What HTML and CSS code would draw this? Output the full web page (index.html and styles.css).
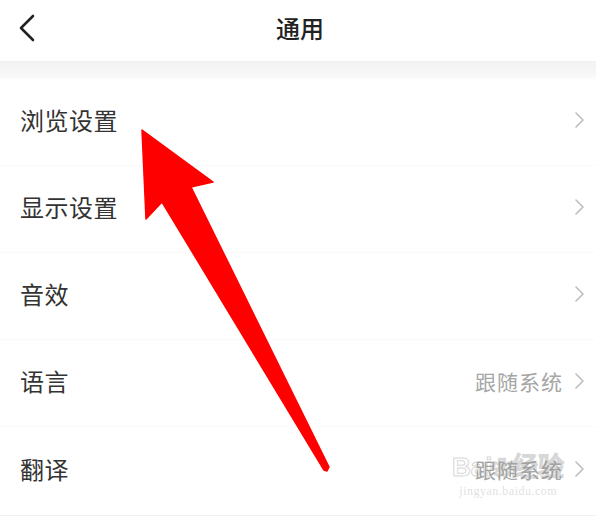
FILE: index.html
```html
<!DOCTYPE html>
<html lang="zh-CN">
<head>
  <meta charset="UTF-8" />
  <meta name="viewport" content="width=device-width, initial-scale=1.0" />
  <title>通用</title>
  <link rel="stylesheet" href="styles.css">
</head>
<body>
  <div class="page">
    <header class="topbar">
      <svg class="back" width="20" height="32" viewBox="0 0 20 32">
        <polyline points="15,3 3,15 15,27" fill="none" stroke="#222" stroke-width="2.6" stroke-linecap="round" stroke-linejoin="round" />
      </svg>
      <h1 class="title">通用</h1>
    </header>
    <div class="band"></div>

    <ul class="settings">
      <li class="row">
        <span class="label">浏览设置</span>
        <svg class="chevron" width="12" height="16" viewBox="0 0 12 16"><polyline points="2,1 9,8 2,15" /></svg>
      </li>
      <li class="row">
        <span class="label">显示设置</span>
        <svg class="chevron" width="12" height="16" viewBox="0 0 12 16"><polyline points="2,1 9,8 2,15" /></svg>
      </li>
      <li class="row">
        <span class="label">音效</span>
        <svg class="chevron" width="12" height="16" viewBox="0 0 12 16"><polyline points="2,1 9,8 2,15" /></svg>
      </li>
      <li class="row">
        <span class="label">语言</span>
        <span class="value">跟随系统</span>
        <svg class="chevron" width="12" height="16" viewBox="0 0 12 16"><polyline points="2,1 9,8 2,15" /></svg>
      </li>
      <li class="row">
        <span class="label">翻译</span>
        <span class="value">跟随系统</span>
        <svg class="chevron" width="12" height="16" viewBox="0 0 12 16"><polyline points="2,1 9,8 2,15" /></svg>
      </li>
    </ul>

    <!-- annotation arrow drawn over the list -->
    <svg class="arrow" width="596" height="516" viewBox="0 0 596 516">
      <polygon points="142,130 213,182 191,187 329,467 327,471 324,470 162,202 146,219" fill="#ff0000" stroke="#ff0000" stroke-width="1.5" stroke-linejoin="round" />
    </svg>

    <div class="watermark">
      <span class="wm-logo">Bai<span class="wm-paw">❀</span>经验</span>
      <span class="wm-url">jingyan.baidu.com</span>
    </div>
  </div>
</body>
</html>
```

FILE: styles.css
```css
body {
  margin: 0;
  background: #fff;
  font-family: "Noto Sans CJK SC", "Noto Sans", sans-serif;
}

.page {
  position: relative;
  width: 596px;
  height: 516px;
  overflow: hidden;
  background: #fff;
}

.topbar {
  height: 61px;
  display: flex;
  align-items: center;
  justify-content: center;
  position: relative;
}

.back {
  position: absolute;
  left: 18px;
  top: 13px;
}

.title {
  margin: 0 0 6px 4px;
  font-size: 24px;
  font-weight: 500;
  color: #222;
}

.band {
  height: 18px;
  background: linear-gradient(to bottom, #f2f2f2, #f6f6f6 60%, #fbfbfb);
}

.settings {
  list-style: none;
  margin: 0;
  padding: 0;
  border-bottom: 1px solid #f0f0f0;
}

.row {
  height: 87px;
  display: flex;
  align-items: center;
  padding: 0 10px 5px 20px;
  border-bottom: 1px solid #fafafa;
  box-sizing: border-box;
}

.row:last-child {
  border-bottom: none;
  height: 88px;
}

.label {
  flex: 1;
  font-size: 24px;
  color: #333;
  letter-spacing: 0.5px;
}

.value {
  font-size: 21px;
  color: #a6a6a6;
  margin-right: 11px;
  letter-spacing: 1px;
}

.chevron polyline {
  fill: none;
  stroke: #bdbdbd;
  stroke-width: 1.6;
  stroke-linecap: round;
  stroke-linejoin: round;
}

.arrow {
  position: absolute;
  left: 0;
  top: 0;
}

.watermark {
  position: absolute;
  left: 452px;
  top: 452px;
  display: flex;
  flex-direction: column;
  align-items: center;
  color: rgba(160, 160, 160, 0.35);
  pointer-events: none;
}

.wm-logo {
  font-family: "Liberation Sans", sans-serif;
  font-size: 26px;
  font-weight: bold;
  line-height: 30px;
  color: transparent;
  -webkit-text-stroke: 1px rgba(150, 150, 150, 0.4);
}

.wm-paw {
  font-size: 20px;
}

.wm-url {
  font-family: "Liberation Serif", serif;
  font-size: 12px;
  letter-spacing: 0.5px;
}
```
